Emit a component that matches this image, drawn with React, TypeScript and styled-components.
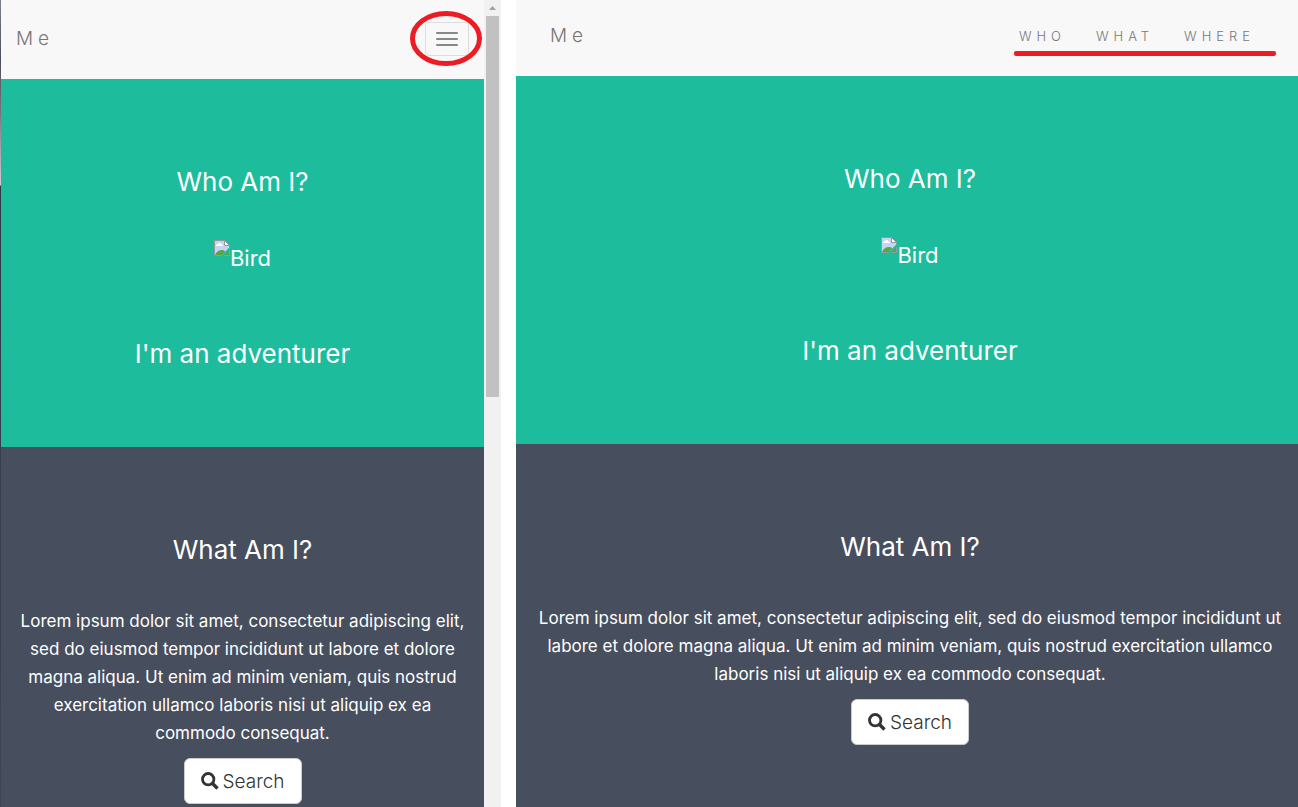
import React from "react";
import styled, { createGlobalStyle } from "styled-components";

const GlobalStyle = createGlobalStyle`
  * { box-sizing: border-box; }
  body {
    margin: 0;
    background: #ffffff;
    color: #ffffff;
    font-family: Inter, "Open Sans", sans-serif;
    font-size: 17px;
    line-height: 28px;
  }
`;

const Comparison = styled.main`
  display: grid;
  grid-template-columns: 501fr 782fr;
  column-gap: 15px;
  height: 100vh;
  overflow: hidden;
`;

const NarrowWindow = styled.div`
  display: flex;
  min-width: 0;
  min-height: 0;
  padding-left: 1px;
  background: linear-gradient(#7b818c 0, #4a4f5c 60px, #77727a 110px, #d4cbd0 185px, #2e3a44 186px, #3c4654 100%);
`;

const Page = styled.div`
  flex: 1;
  display: flex;
  flex-direction: column;
  min-width: 0;
  min-height: 0;
  overflow: hidden;
`;

const Navbar = styled.header<{ $wide?: boolean }>`
  flex: none;
  display: flex;
  align-items: center;
  justify-content: space-between;
  height: ${(p) => (p.$wide ? 76 : 79)}px;
  padding: ${(p) => (p.$wide ? "0 28px 4px 34px" : "0 15px 1px")};
  background: #f8f8f8;
`;

const Brand = styled.a`
  color: #777777;
  font-size: 19px;
  font-weight: 300;
  letter-spacing: 5px;
  text-decoration: none;
`;

const ToggleHolder = styled.div`
  position: relative;
`;

const Toggle = styled.button`
  display: flex;
  flex-direction: column;
  align-items: center;
  justify-content: center;
  gap: 4px;
  width: 44px;
  height: 34px;
  padding: 0;
  border: 1px solid #dddddd;
  border-radius: 4px;
  background: transparent;
`;

const ToggleBar = styled.span`
  width: 22px;
  height: 2px;
  border-radius: 1px;
  background: #888888;
`;

const CircleMark = styled.svg`
  position: absolute;
  top: -11px;
  left: -15px;
  width: 72px;
  height: 55px;
  pointer-events: none;
`;

const Links = styled.nav`
  position: relative;
  display: flex;
`;

const NavLink = styled.a`
  padding: 0 15px;
  color: #777777;
  font-size: 13px;
  font-weight: 300;
  letter-spacing: 5px;
  text-decoration: none;
`;

const UnderlineMark = styled.span`
  position: absolute;
  top: 29px;
  left: 10px;
  right: -6px;
  height: 5px;
  border-radius: 2px;
  background: #ed1c24;
`;

const Section = styled.section<{ $tone: "green" | "slate"; $wide?: boolean }>`
  flex: ${(p) => (p.$tone === "slate" ? "1 0 auto" : "none")};
  display: flex;
  flex-direction: column;
  align-items: center;
  padding: ${(p) => (p.$wide ? "89px 12px 79px 18px" : "89px 15px 79px")};
  background: ${(p) => (p.$tone === "green" ? "#1cbc9c" : "#474e5d")};
  text-align: center;
`;

const Heading = styled.h3`
  margin: 0;
  font-size: 26px;
  font-weight: 400;
  line-height: 28px;
`;

const Picture = styled.div`
  display: flex;
  align-items: flex-start;
  margin: 43px 0 73px;
  padding-top: 1px;
  font-size: 22px;
  line-height: 36px;
  height: 28px;
`;

const Copy = styled.p`
  margin: 43px 0 11px;
`;

const SearchButton = styled.button`
  display: flex;
  align-items: center;
  justify-content: center;
  gap: 4px;
  width: 118px;
  height: 46px;
  padding: 0;
  border: 1px solid #cccccc;
  border-radius: 6px;
  background: #ffffff;
  color: #333333;
  font-family: inherit;
  font-size: 19px;
  font-weight: 300;
`;

const BrokenImage = () => (
  <svg width="16" height="16" viewBox="0 0 16 16" aria-hidden="true">
    <path d="M0.5 0.5H10.5L15.5 5.5V8L8 15.5H0.5Z" fill="#c5d5f6" stroke="#999999" />
    <path d="M10.5 0.5V5.5H15.5Z" fill="#ffffff" stroke="#999999" />
    <path d="M2 6C2 4.500 3 4 4 4C4.500 2.500 7 2.500 7.500 4C8.500 4 9 5 8.500 6Z" fill="#ffffff" />
    <path d="M1 15C2.500 11.500 5 10 8 10C9.500 10 10.500 10.500 11 11.500L8 15Z" fill="#57a83a" />
    <path d="M7 16L16 7V9.500L9.500 16Z" fill="#1cbc9c" />
    <path d="M10 15.500H15.500V10.500Z" fill="#57a83a" />
    <path d="M10 15.500H15.500V10.500" fill="none" stroke="#999999" />
  </svg>
);

const SearchIcon = () => (
  <svg width="18" height="18" viewBox="0 0 18 18" aria-hidden="true">
    <circle cx="7.200" cy="7.200" r="5.700" fill="none" stroke="#333333" strokeWidth="2.800" />
    <path d="M11.300 11.300L16.500 16.500" stroke="#333333" strokeWidth="3.400" />
  </svg>
);

const Who = ({ wide }: { wide?: boolean }) => (
  <Section $tone="green" $wide={wide}>
    <Heading>Who Am I?</Heading>
    <Picture>
      <BrokenImage />
      <span>Bird</span>
    </Picture>
    <Heading>I'm an adventurer</Heading>
  </Section>
);

const What = ({ wide }: { wide?: boolean }) => (
  <Section $tone="slate" $wide={wide}>
    <Heading>What Am I?</Heading>
    <Copy>
      Lorem ipsum dolor sit amet, consectetur adipiscing elit, sed do eiusmod tempor incididunt ut
      labore et dolore magna aliqua. Ut enim ad minim veniam, quis nostrud exercitation ullamco
      laboris nisi ut aliquip ex ea commodo consequat.
    </Copy>
    <SearchButton type="button">
      <SearchIcon />
      <span>Search</span>
    </SearchButton>
  </Section>
);

const ScrollTrack = styled.div`
  flex: none;
  display: flex;
  flex-direction: column;
  align-items: center;
  width: 17px;
  background: #f1f1f1;
`;

const ScrollArrow = styled.svg`
  flex: none;
  width: 17px;
  height: 16px;
`;

const ScrollThumb = styled.div`
  width: 13px;
  height: 381px;
  background: #c1c1c1;
`;

export default function App() {
  return (
    <>
      <GlobalStyle />
      <Comparison>
        <NarrowWindow>
          <Page>
            <Navbar>
              <Brand href="#">Me</Brand>
              <ToggleHolder>
                <Toggle type="button" aria-label="Toggle navigation">
                  <ToggleBar />
                  <ToggleBar />
                  <ToggleBar />
                </Toggle>
                <CircleMark viewBox="0 0 72 55" aria-hidden="true">
                  <ellipse cx="36" cy="27.500" rx="33.500" ry="25" fill="none" stroke="#ed1c24" strokeWidth="5" />
                </CircleMark>
              </ToggleHolder>
            </Navbar>
            <Who />
            <What />
          </Page>
          <ScrollTrack>
            <ScrollArrow viewBox="0 0 17 16" aria-hidden="true">
              <path d="M5 10L8.500 6L12 10Z" fill="#a0a0a0" />
            </ScrollArrow>
            <ScrollThumb />
          </ScrollTrack>
        </NarrowWindow>
        <Page>
          <Navbar $wide>
            <Brand href="#">Me</Brand>
            <Links>
              <NavLink href="#who">WHO</NavLink>
              <NavLink href="#what">WHAT</NavLink>
              <NavLink href="#where">WHERE</NavLink>
              <UnderlineMark />
            </Links>
          </Navbar>
          <Who wide />
          <What wide />
        </Page>
      </Comparison>
    </>
  );
}
